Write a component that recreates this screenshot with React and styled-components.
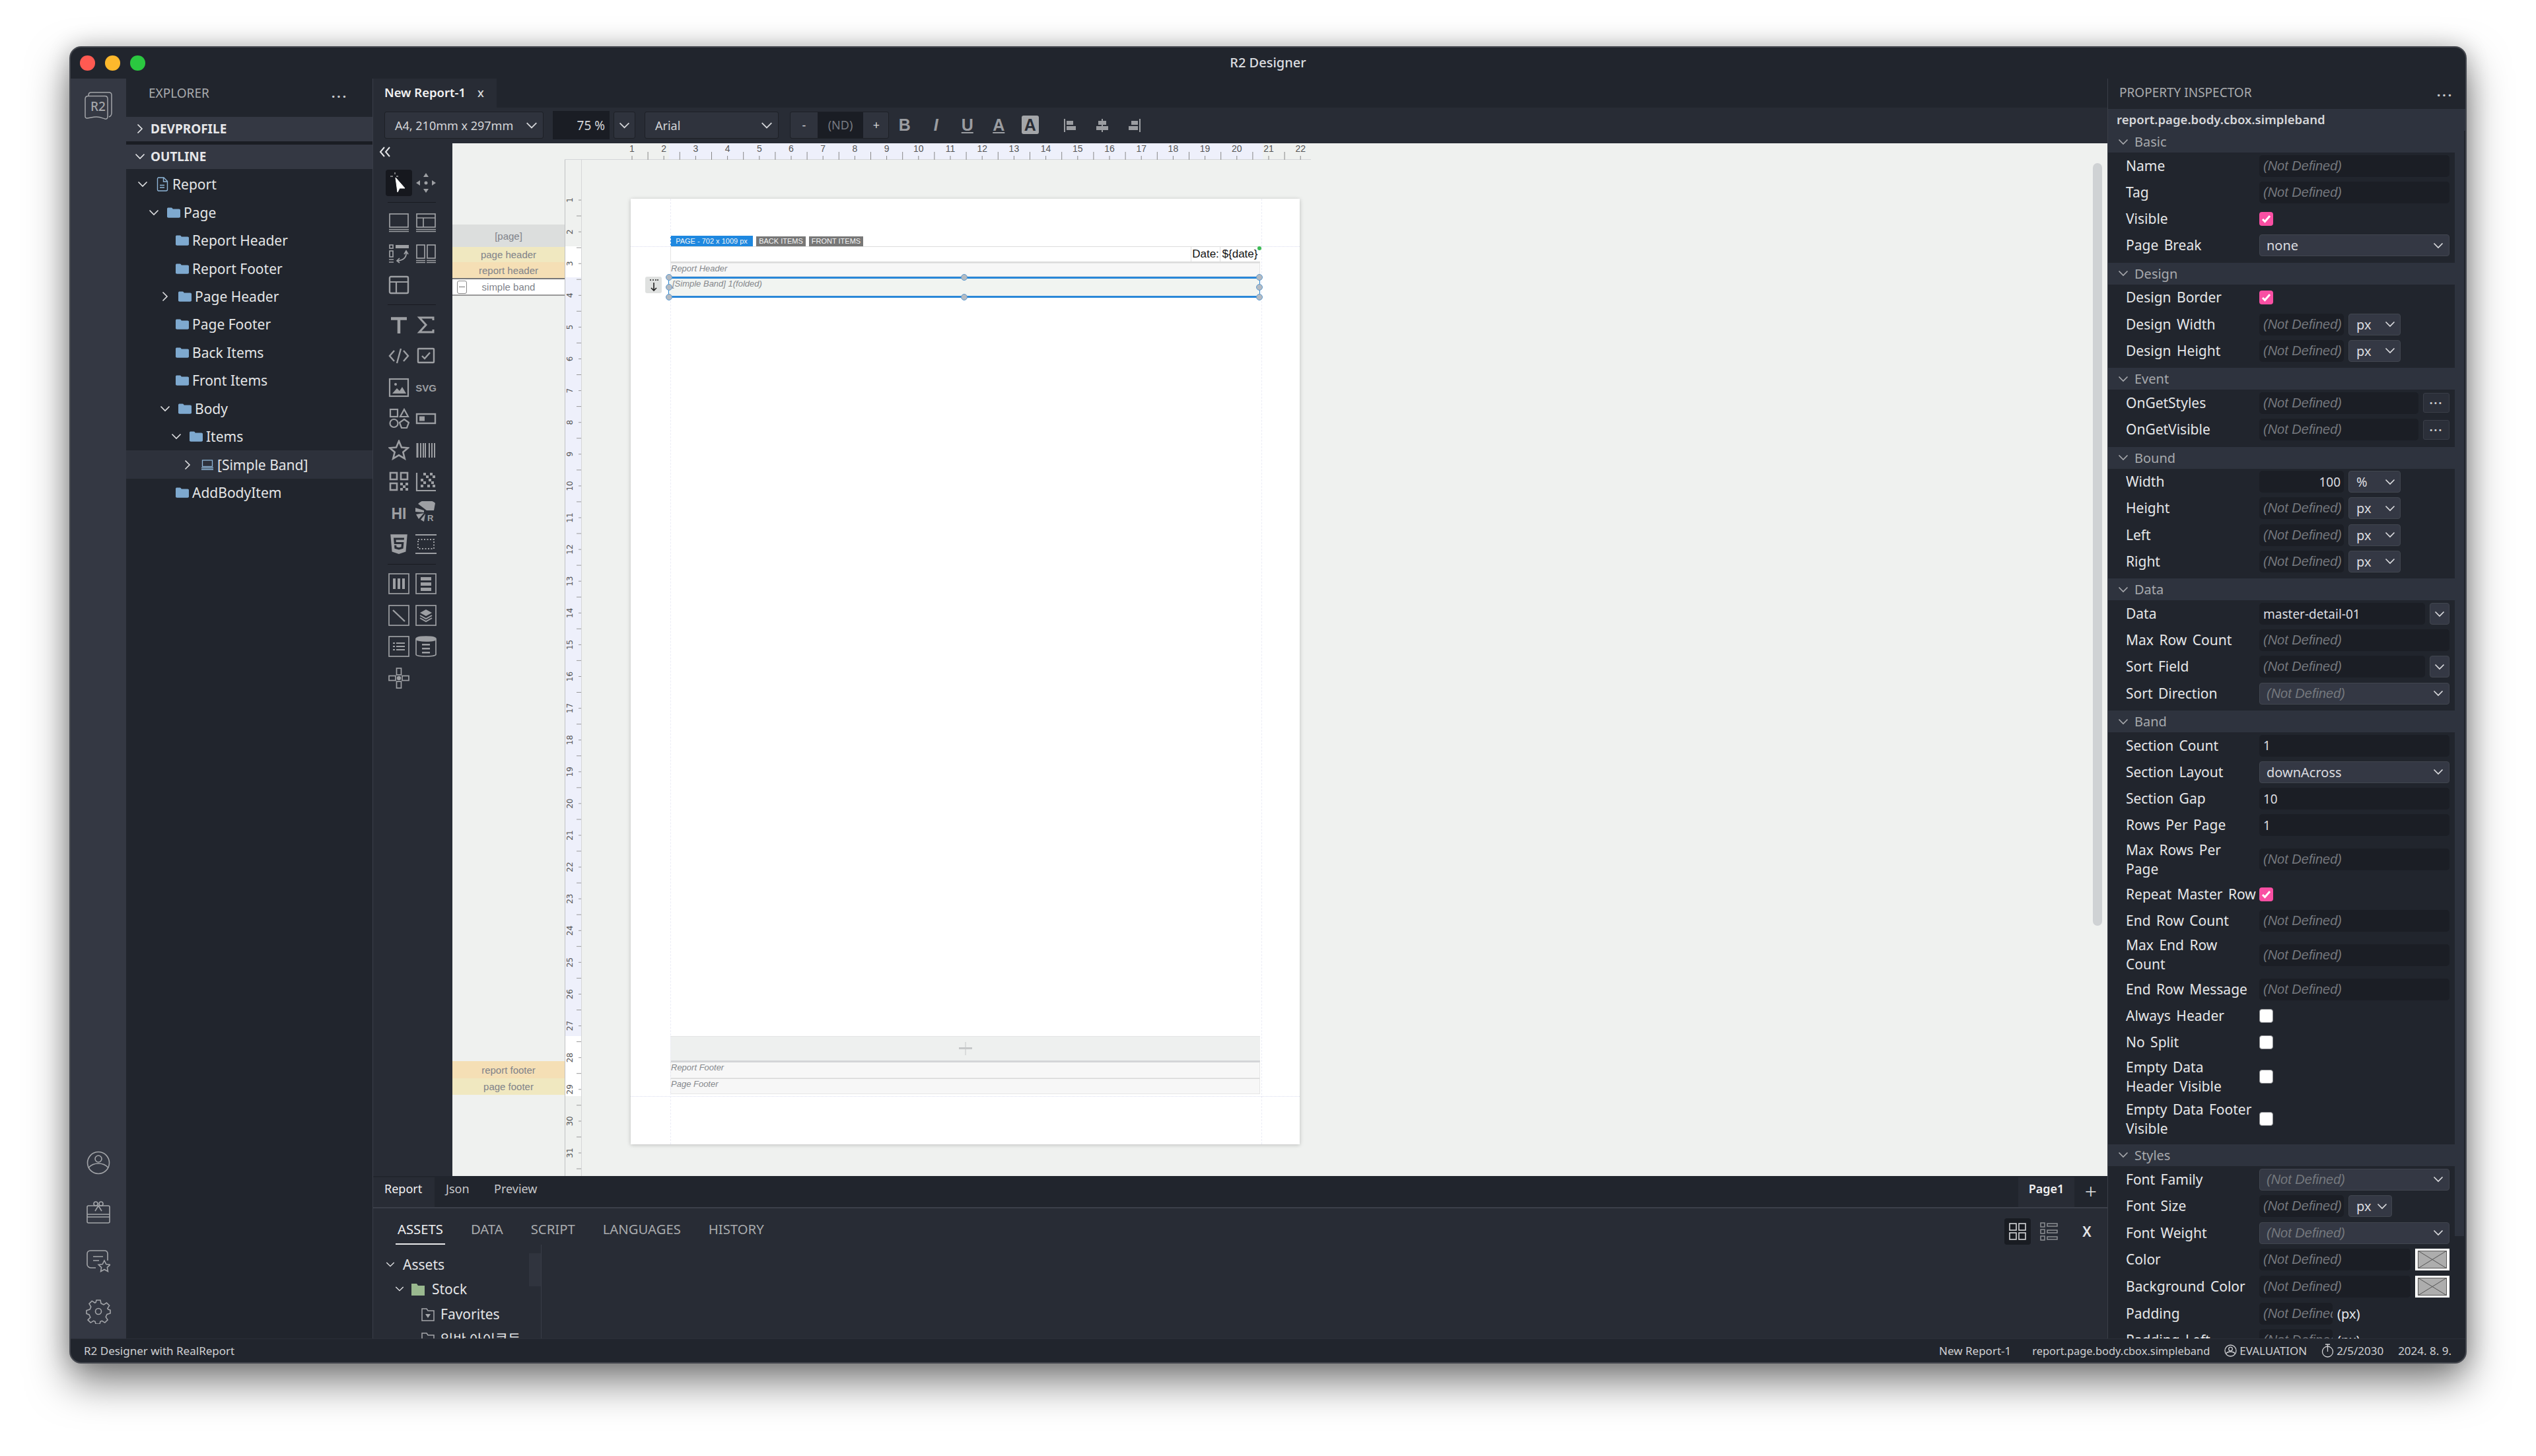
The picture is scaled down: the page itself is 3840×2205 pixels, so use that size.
import React from 'react'
import styled, { createGlobalStyle } from 'styled-components'
import { FaHtml5 } from 'react-icons/fa'

const GlobalStyle = createGlobalStyle`
  html, body { margin: 0; padding: 0; background: #fff; }
  body { width: 3840px; height: 2205px; overflow: hidden; font-family: "Noto Sans", "Noto Sans CJK KR", sans-serif; }
  * { box-sizing: border-box; }
`

const Screen = styled.div`
  width: 3840px;
  height: 2205px;
  padding: 70px 105px 140px;
`
const Window = styled.div`
  width: 3630px;
  height: 1995px;
  display: flex;
  flex-direction: column;
  background: #21252d;
  border: 2px solid #44474e;
  border-radius: 18px;
  overflow: hidden;
  box-shadow: 0 28px 62px rgba(0, 0, 0, 0.5), 0 0 34px rgba(0, 0, 0, 0.2);
`
const TitleBar = styled.div`
  height: 47px;
  flex: none;
  display: grid;
  grid-template-columns: 1fr auto 1fr;
  align-items: center;
`
const Lights = styled.div`
  display: flex;
  gap: 15.4px;
  margin-left: 14px;
`
const Light = styled.span`
  width: 22.6px;
  height: 22.6px;
  border-radius: 50%;
  background: ${(p) => p.$color};
`
const Title = styled.div`
  font-size: 20px;
  font-weight: 500;
  padding-bottom: 3px;
  color: #dcdde0;
`
const Main = styled.div`
  flex: 1;
  min-height: 0;
  display: flex;
`
const Rail = styled.div`
  width: 84px;
  flex: none;
  background: #343843;
  display: flex;
  flex-direction: column;
  justify-content: space-between;
  align-items: center;
  padding: 20px 0 22px;
  color: #a3a5a9;
`
const RailGroup = styled.div`
  display: flex;
  flex-direction: column;
  align-items: center;
  gap: 40px;
`
const Explorer = styled.div`
  width: 373px;
  flex: none;
  display: flex;
  flex-direction: column;
`
const PanelHead = styled.div`
  height: ${(p) => p.$h}px;
  flex: none;
  display: flex;
  align-items: center;
  justify-content: space-between;
  padding: 0 ${(p) => p.$right}px ${(p) => p.$pb}px ${(p) => p.$left}px;
  font-size: 19px;
  color: #a9abae;
`
const Dots = styled.span`
  font-size: 19px;
  font-weight: 700;
  letter-spacing: 3px;
  color: #c9cacc;
  line-height: 1;
`
const FoldBar = styled.div`
  height: ${(p) => p.$h}px;
  flex: none;
  display: flex;
  align-items: center;
  background: #343843;
  padding: 0 0 2px 13px;
  gap: 8px;
  font-size: 19px;
  font-weight: 700;
  color: #e6e7e9;
`
const FoldLine = styled.div`
  height: 5px;
  flex: none;
  background: #1a1d23;
`
const Tree = styled.div`
  padding-top: 2px;
  display: flex;
  flex-direction: column;
`
const TreeRow = styled.div`
  height: 42.45px;
  display: flex;
  align-items: center;
  padding-left: ${(p) => p.$x - 199}px;
  font-size: 21px;
  color: #e4e5e7;
  background: ${(p) => (p.$active ? '#2d313b' : 'transparent')};
`
const ChevSlot = styled.span`
  width: 16px;
  flex: none;
  display: flex;
  justify-content: center;
  visibility: ${(p) => (p.$hidden ? 'hidden' : 'visible')};
  color: #dfe0e2;
  margin-right: 12px;
`
const TreeIcon = styled.span`
  width: 20px;
  flex: none;
  display: flex;
  justify-content: center;
  margin-right: 5px;
  color: #8fb6d8;
`
const Center = styled.div`
  flex: 1;
  min-width: 0;
  display: flex;
  flex-direction: column;
  border-left: 1px solid #3a3e48;
`
const TabStrip = styled.div`
  height: 44px;
  flex: none;
  display: flex;
`
const DocTab = styled.div`
  width: 187px;
  background: #282c35;
  display: flex;
  align-items: center;
  padding: 0 0 3px 17px;
  gap: 18px;
  font-size: 18.5px;
  font-weight: 600;
  color: #f2f2f3;
`
const DocClose = styled.span`
  font-size: 18px;
  font-weight: 500;
  color: #d8d9db;
`
const Toolbar = styled.div`
  height: 54px;
  flex: none;
  background: #282c35;
  display: flex;
  align-items: center;
  padding: 0 0 1px 17px;
  font-size: 18px;
  color: #d4d5d8;
`
const ToolSelect = styled.div`
  width: ${(p) => p.$w}px;
  height: 41px;
  flex: none;
  margin-left: ${(p) => p.$ml || 0}px;
  display: flex;
  align-items: center;
  justify-content: space-between;
  padding: 0 ${(p) => p.$pr ?? 8}px 0 ${(p) => p.$pl ?? 15}px;
  background: #2f333d;
  border: 1px solid #1d2026;
  border-radius: 3px;
`
const ZoomInput = styled.div`
  width: 86px;
  height: 43px;
  flex: none;
  margin-left: 14px;
  background: #1a1d24;
  display: flex;
  align-items: center;
  justify-content: flex-end;
  padding-right: 7px;
  font-size: 19px;
`
const Stepper = styled.div`
  width: 150px;
  height: 41px;
  flex: none;
  margin-left: 17px;
  display: grid;
  grid-template-columns: 41px 69px 40px;
  background: #2f333d;
  border: 1px solid #1d2026;
  border-radius: 3px;
  text-align: center;
  line-height: 39px;
`
const StepValue = styled.span`
  background: #1a1d24;
  color: #777a81;
`
const FormatBtn = styled.span`
  width: 47.5px;
  flex: none;
  text-align: center;
  font-family: "Liberation Sans", sans-serif;
  font-size: 25px;
  font-weight: 700;
  font-style: ${(p) => (p.$italic ? 'italic' : 'normal')};
  text-decoration: ${(p) => (p.$under ? 'underline' : 'none')};
  color: #9b9da1;
`
const BoxA = styled.span`
  display: inline-block;
  width: 26px;
  height: 28px;
  line-height: 28px;
  border-radius: 3px;
  background: #a4a6a9;
  color: #2a2d35;
  font-size: 25px;
`
const AlignBtn = styled.span`
  width: 48px;
  flex: none;
  display: flex;
  justify-content: center;
  margin-left: ${(p) => p.$ml || 0}px;
  color: #9b9da1;
`
const Workspace = styled.div`
  height: 1564px;
  flex: none;
  display: flex;
`
const Toolbox = styled.div`
  width: 120px;
  flex: none;
  background: #282c35;
  padding-left: 18px;
  display: flex;
  flex-direction: column;
  color: #9d9fa3;
`
const Collapse = styled.div`
  height: 36px;
  flex: none;
  padding-top: 4px;
  margin-left: -9px;
  color: #e4e5e7;
`
const ToolGrid = styled.div`
  display: grid;
  grid-template-columns: 41.5px 41.5px;
  grid-auto-rows: 47.5px;
`
const ToolCell = styled.div`
  display: flex;
  align-items: center;
  justify-content: center;
`
const ActiveTool = styled.div`
  width: 40px;
  height: 40px;
  display: flex;
  align-items: center;
  justify-content: center;
  border-radius: 4px;
  background: #16181e;
`
const ToolSep = styled.div`
  width: 73px;
  height: 12.5px;
  margin-left: 4px;
  flex: none;
  display: flex;
  align-items: center;
  &::after {
    content: '';
    width: 100%;
    height: 1px;
    background: #181a20;
  }
`
const Canvas = styled.div`
  flex: 1;
  min-width: 0;
  position: relative;
  display: flex;
  background: #eff1ef;
  overflow: hidden;
`
const CanvasThumb = styled.div`
  position: absolute;
  right: 8px;
  top: 30px;
  width: 14px;
  height: 1155px;
  border-radius: 7px;
  background: #cfd2d4;
`
const BandColumn = styled.div`
  width: 170px;
  flex: none;
  display: flex;
  flex-direction: column;
  padding: 123px 0;
  font-family: "Liberation Sans", sans-serif;
  font-size: 15px;
  color: #80838a;
`
const BandTag = styled.div`
  height: ${(p) => p.$h}px;
  flex: none;
  display: flex;
  align-items: center;
  justify-content: center;
  position: relative;
  background: ${(p) => p.$bg};
  border-top: ${(p) => (p.$ruled ? '2px solid #777' : 'none')};
  border-bottom: ${(p) => (p.$ruled ? '2px solid #999' : 'none')};
  margin-bottom: ${(p) => (p.$push ? 'auto' : '0')};
`
const FoldMark = styled.span`
  position: absolute;
  left: 7px;
  top: 2px;
  width: 15px;
  height: 20px;
  border: 1px solid #888;
  border-radius: 3px;
  &::after {
    content: '';
    position: absolute;
    left: 2px;
    right: 2px;
    top: 8px;
    height: 1px;
    background: #777;
  }
`
const RulerStage = styled.div`
  flex: 1;
  min-width: 0;
  display: flex;
  flex-direction: column;
`
const TopRuler = styled.svg`
  display: block;
  height: 25px;
  width: 2336px;
  flex: none;
`
const StageRow = styled.div`
  flex: 1;
  min-height: 0;
  display: flex;
`
const LeftRuler = styled.svg`
  display: block;
  width: 26px;
  height: 1539px;
  flex: none;
  border-left: 1px solid #bfc1c3;
  border-right: 1px solid #d6d7d8;
`
const Stage = styled.div`
  flex: 1;
  padding: 59px 0 0 74px;
`
const Sheet = styled.div`
  position: relative;
  width: 1013px;
  height: 1432px;
  display: flex;
  flex-direction: column;
  padding: 56px 60px 76px;
  background: #fff;
  box-shadow: 0 1px 6px rgba(0, 0, 0, 0.22);
  font-family: "Liberation Sans", sans-serif;
`
const GuideV = styled.span`
  position: absolute;
  top: 0;
  bottom: 0;
  left: ${(p) => p.$x}px;
  border-left: 1px dashed #ebecf6;
`
const GuideH = styled.span`
  position: absolute;
  left: 0;
  right: 0;
  top: ${(p) => p.$y}px;
  border-top: 1px dotted #d9dbee;
`
const SheetTabs = styled.div`
  height: 16px;
  flex: none;
  display: flex;
  align-items: flex-end;
  gap: 5px;
`
const SheetTab = styled.span`
  height: ${(p) => (p.$on ? 16 : 15)}px;
  width: ${(p) => p.$w}px;
  flex: none;
  text-align: center;
  line-height: ${(p) => (p.$on ? 16 : 15)}px;
  font-size: 11px;
  white-space: nowrap;
  color: #f4f4f4;
  background: ${(p) => (p.$on ? '#1e88e0' : '#777')};
`
const HeaderBand = styled.div`
  height: 25px;
  flex: none;
  display: flex;
  justify-content: flex-end;
  padding-right: 1px;
  border-top: 1px solid #ddd;
  border-bottom: 2px solid #dcdcdc;
  border-left: 1px solid #e3e3e3;
  position: relative;
  font-size: 17px;
  color: #111;
`
const DateCell = styled.span`
  width: ${(p) => p.$w}px;
  flex: none;
  border-left: 1px solid #e0e0e0;
  text-align: center;
  white-space: nowrap;
  line-height: 22px;
`
const GreenDot = styled.span`
  position: absolute;
  right: -2px;
  top: -1px;
  width: 6px;
  height: 6px;
  border-radius: 50%;
  background: #3dbb55;
`
const GrayBand = styled.div`
  height: ${(p) => p.$h}px;
  flex: none;
  background: #f7f7f7;
  border: 1px solid #e6e6e6;
  border-top-color: ${(p) => p.$top || '#e6e6e6'};
  font-size: 13px;
  font-style: italic;
  color: #85888c;
`
const SimpleBand = styled.div`
  position: relative;
  height: 32px;
  flex: none;
  margin-left: -3px;
  background: #f1f4f1;
  border-top: 3px solid #2a87d8;
  border-bottom: 3px solid #2a87d8;
  border-left: 1px solid #2a87d8;
  border-right: 1px solid #2a87d8;
  padding-left: 5px;
  font-size: 13px;
  font-style: italic;
  color: #85888c;
`
const Handle = styled.span`
  position: absolute;
  left: ${(p) => p.$x};
  top: ${(p) => p.$y};
  width: 10px;
  height: 10px;
  margin: -5px 0 0 -5px;
  border-radius: 50%;
  background: #b4bac1;
  border: 1px solid #5d9bd2;
`
const DragWidget = styled.span`
  position: absolute;
  left: -36px;
  top: -3px;
  width: 25px;
  height: 25px;
  border-radius: 3px;
  background: #dfe1e0;
  display: flex;
  align-items: center;
  justify-content: center;
  color: #222;
`
const BodySpace = styled.div`
  flex: 1;
`
const AddBand = styled.div`
  height: 39px;
  flex: none;
  display: flex;
  align-items: center;
  justify-content: center;
  background: #eef0ef;
  border-top: 1px solid #e4e5e5;
  border-bottom: 2px solid #d4d5d8;
  color: #c6c8c9;
`
const Bottom = styled.div`
  flex: 1;
  min-height: 0;
  display: flex;
  flex-direction: column;
`
const PageTabs = styled.div`
  height: 49px;
  flex: none;
  display: flex;
  padding-top: 2px;
  border-bottom: 2px solid #3b3f49;
  font-size: 18px;
  color: #c6c7ca;
`
const PageTab = styled.div`
  width: ${(p) => p.$w}px;
  flex: none;
  display: flex;
  align-items: center;
  justify-content: ${(p) => (p.$center ? 'center' : 'flex-start')};
  padding-left: ${(p) => p.$pl || 0}px;
  padding-bottom: 11px;
  margin-left: ${(p) => p.$ml || 0};
  background: ${(p) => (p.$on ? '#282c35' : 'transparent')};
  color: ${(p) => (p.$on ? '#f1f1f2' : '#c6c7ca')};
  font-weight: ${(p) => (p.$bold ? 600 : 400)};
`
const AddPage = styled.span`
  width: 50px;
  flex: none;
  text-align: center;
  font-size: 32px;
  line-height: 42px;
  font-weight: 300;
  color: #e0e1e3;
`
const AssetPanel = styled.div`
  flex: 1;
  min-height: 0;
  overflow: hidden;
  background: #282c35;
`
const AssetHead = styled.div`
  height: 55px;
  display: flex;
  justify-content: space-between;
  padding: 0 16px 0 34px;
`
const AssetTabs = styled.div`
  display: flex;
  gap: 36px;
`
const AssetTab = styled.div`
  height: 55px;
  padding: 9px 3px 0;
  display: flex;
  align-items: center;
  font-size: 20.3px;
  color: ${(p) => (p.$on ? '#eeeef0' : '#a9abae')};
  border-bottom: 2px solid ${(p) => (p.$on ? '#e8e8ea' : 'transparent')};
`
const ViewTools = styled.div`
  display: flex;
  align-items: center;
  padding-top: 15px;
  color: #c9cacc;
`
const ViewBtn = styled.span`
  width: 40px;
  height: 40px;
  display: flex;
  align-items: center;
  justify-content: center;
  border-radius: 4px;
  background: ${(p) => (p.$on ? '#191c22' : 'transparent')};
  margin-right: ${(p) => p.$mr}px;
  color: ${(p) => (p.$dim ? '#8c8e92' : '#d4d5d7')};
`
const CloseX = styled.span`
  width: 30px;
  text-align: center;
  font-size: 21px;
  font-weight: 600;
  color: #e4e5e7;
`
const AssetTree = styled.div`
  position: relative;
  width: 255px;
  height: 142px;
  padding-top: 11px;
  border-right: 1px solid #393d47;
`
const AssetThumb = styled.span`
  position: absolute;
  right: 0;
  top: 13px;
  width: 18px;
  height: 50px;
  background: #30343e;
`
const AssetRow = styled.div`
  height: 37.5px;
  display: flex;
  align-items: center;
  padding-left: ${(p) => p.$x}px;
  gap: ${(p) => p.$gap}px;
  font-size: 21px;
  white-space: nowrap;
  color: #e4e5e7;
`
const StatusBar = styled.div`
  height: 36px;
  flex: none;
  display: flex;
  align-items: center;
  justify-content: space-between;
  padding: 0 21px 0 20px;
  border-top: 1px solid #2b2f38;
  font-size: 17px;
  color: #cfd0d3;
`
const StatusItems = styled.div`
  display: flex;
  align-items: center;
  gap: 22px;
`
const StatusItem = styled.span`
  display: flex;
  align-items: center;
  gap: 4px;
  font-size: ${(p) => p.$size || 17}px;
  margin-right: ${(p) => p.$mr || 0}px;
`
const Inspector = styled.div`
  width: 542px;
  flex: none;
  display: flex;
  flex-direction: column;
  border-left: 1px solid #3a3e48;
  overflow: hidden;
`
const PathBar = styled.div`
  height: 33px;
  flex: none;
  display: flex;
  align-items: center;
  padding: 0 0 2px 13px;
  background: #2e333e;
  font-size: 18.6px;
  font-weight: 600;
  color: #d6d7da;
`
const PropScroll = styled.div`
  flex: 1;
  min-height: 0;
  display: flex;
  overflow: hidden;
`
const PropList = styled.div`
  width: 525px;
  flex: none;
`
const PropThumb = styled.div`
  width: 14px;
  height: 1674px;
  flex: none;
  background: #2e333e;
`
const SectionHead = styled.div`
  height: 33px;
  display: flex;
  align-items: center;
  padding-left: 15px;
  gap: 9px;
  background: #2e333e;
  font-size: 20px;
  color: #a7a9ad;
`
const SectionBody = styled.div`
  padding: 0 0 6px;
`
const Row = styled.div`
  min-height: ${(p) => p.$h}px;
  display: flex;
  align-items: center;
  padding: 3px 8px 3px 27px;
`
const Label = styled.div`
  width: 202px;
  flex: none;
  font-size: 21px;
  line-height: 29px;
  word-spacing: 3px;
  white-space: pre-line;
  color: #e6e7e9;
`
const Fields = styled.div`
  flex: 1;
  min-width: 0;
  display: flex;
  align-items: center;
  gap: 7px;
`
const TextBox = styled.div`
  height: 33px;
  width: ${(p) => (p.$w ? `${p.$w}px` : 'auto')};
  flex: ${(p) => (p.$w ? 'none' : 1)};
  min-width: 0;
  overflow: hidden;
  display: flex;
  align-items: center;
  justify-content: ${(p) => (p.$right ? 'flex-end' : 'flex-start')};
  padding: 0 ${(p) => (p.$right ? 5 : 0)}px 0 6px;
  background: #1b1e25;
  border-radius: 5px;
  font-size: 19px;
  white-space: nowrap;
  color: #dcdde0;
`
const Blank = styled.span`
  display: block;
  min-width: 0;
  overflow: hidden;
  font-family: "Liberation Sans", sans-serif;
  font-style: italic;
  font-size: 20px;
  white-space: nowrap;
  color: #75787e;
`
const DropBox = styled.div`
  height: 33px;
  width: ${(p) => (p.$w ? `${p.$w}px` : 'auto')};
  flex: ${(p) => (p.$w ? 'none' : 1)};
  display: flex;
  align-items: center;
  justify-content: space-between;
  padding: 0 ${(p) => p.$pr ?? 8}px 0 ${(p) => p.$pl ?? 10}px;
  background: #343844;
  border: 1px solid #41464f;
  border-radius: 4px;
  font-size: 20px;
  color: #dcdde0;
`
const Tick = styled.span`
  width: 21px;
  height: 21px;
  flex: none;
  display: flex;
  align-items: center;
  justify-content: center;
  border-radius: 4px;
  background: ${(p) => (p.$on ? '#f94fa3' : '#fff')};
  border: ${(p) => (p.$on ? 'none' : '1px solid #8a8c90')};
  color: #fff;
`
const MoreBtn = styled.span`
  width: 40px;
  height: 30px;
  flex: none;
  text-align: center;
  line-height: 20px;
  font-weight: 700;
  letter-spacing: 2px;
  font-size: 17px;
  background: #2b2f39;
  border: 1px solid #3a3e48;
  border-radius: 3px;
  color: #c9cacc;
`
const Swatch = styled.span`
  width: 52px;
  height: 33px;
  flex: none;
  background: #fff;
  padding: 3px 4px;
  display: flex;
`
const UnitText = styled.span`
  font-size: 20px;
  color: #e6e7e9;
`

function Chevron({ dir = 'down', size = 16 }) {
  const rot = { down: 0, right: -90 }[dir]
  return (
    <svg width={size} height={size} viewBox="0 0 16 16" fill="none" stroke="currentColor" strokeWidth="1.6" style={{ transform: `rotate(${rot}deg)` }}>
      <path d="M1.5 4.5 8 11l6.5-6.5" />
    </svg>
  )
}

function FolderIcon() {
  return (
    <svg width="20" height="16" viewBox="0 0 20 16" fill="#7ea9cf">
      <path d="M0 2.2C0 1 .8.5 1.8.5h4.6c.8 0 1.3.3 1.7 1l.6.9H18c1.2 0 2 .7 2 1.8V14c0 1-.8 1.7-2 1.7H2c-1.2 0-2-.7-2-1.7z" />
    </svg>
  )
}

function DocIcon() {
  return (
    <svg width="18" height="22" viewBox="0 0 18 22" fill="none" stroke="#8fb6d8" strokeWidth="1.4">
      <path d="M2.5 1H11l5.500 5.500V19a2 2 0 0 1-2 2h-12a2 2 0 0 1-1-2V3a2 2 0 0 1 1-2z" />
      <path d="M10.500 1v6h6M5 12.500h7M5 16h7" />
    </svg>
  )
}

function BandIcon() {
  return (
    <svg width="18" height="16" viewBox="0 0 18 16" fill="none" stroke="#8fb6d8" strokeWidth="1.3">
      <rect x="1.5" y="1" width="15" height="9.5" />
      <path d="M0 12.5h18M0 15h18" />
    </svg>
  )
}

function Logo() {
  return (
    <svg width="42" height="42" viewBox="0 0 42 42" fill="none" stroke="currentColor" strokeWidth="1.5">
      <path d="M6 7V5.500C6 3 7.500 1 10 1h27c2.500 0 4 1.500 4 4v27c0 3-1 5-4 6" />
      <path d="M1 11c0-3 1.500-4.500 4.500-4.500H31c2.500 0 4 1.500 4 4.500v27c0 2.500-2 3.500-4 3-3.500-1-7-3-13-3-5 0-10 1.500-14 2-2 .3-3-1-3-3z" />
      <text x="9" y="29" fontFamily="Noto Sans" fontSize="19" fontWeight="500" fill="currentColor" stroke="none">R2</text>
    </svg>
  )
}

const S = ({ children, w = 32, h = 32 }) => (
  <svg width={w} height={h} viewBox={`0 0 ${w} ${h}`} fill="none" stroke="currentColor" strokeWidth="1.7">
    {children}
  </svg>
)

const TOOLS_B = [
  <S key="a"><rect x="2" y="3" width="28" height="20" /><path d="M1 26.500h30M1 29.500h30" /></S>,
  <S key="b"><rect x="2" y="3" width="28" height="20" /><path d="M2 9h28M12 9v14M1 26.500h30M1 29.500h30" /></S>,
  <S key="c">
    <rect x="2" y="3" width="5" height="5" />
    <rect x="11" y="3" width="20" height="5" fill="currentColor" stroke="none" />
    <rect x="2" y="12" width="5" height="9" />
    <path d="M1 25h7M1 29h7M27 13c1 8-3 13-13 14M24 17l3-5 3 5M17 23l-4 4 4 3" />
  </S>,
  <S key="d"><rect x="2" y="3" width="12" height="20" /><rect x="18" y="3" width="12" height="20" /><path d="M1 26.500h14M1 29.500h14M17 26.500h14M17 29.500h14" /></S>,
  <S key="e"><rect x="2" y="3" width="28" height="25" rx="2" strokeWidth="2.4" /><path d="M2 11h28M12 11v17" strokeWidth="2.2" /></S>,
]
const TOOLS_C = [
  <S key="a"><path d="M4 6.500h24M16 6.500V29" strokeWidth="4.5" /></S>,
  <S key="b"><path d="M27 9V5H6l10 11L6 27h21v-4" strokeWidth="3" /></S>,
  <S key="c"><path d="M9 8l-7 8 7 8M23 8l7 8-7 8M19 5l-6 22" strokeWidth="2.4" /></S>,
  <S key="d"><rect x="4" y="5" width="24" height="21" rx="1" strokeWidth="2.4" /><path d="M10 16l4 4 8-9" strokeWidth="2.4" /></S>,
  <S key="e"><rect x="2" y="3" width="28" height="26" strokeWidth="2.2" /><circle cx="11" cy="11" r="2" fill="currentColor" stroke="none" /><path d="M6 25l7-8 4 4 4-6 6 10z" fill="currentColor" stroke="none" /></S>,
  <svg key="f" width="34" height="32" viewBox="0 0 34 32"><text x="17" y="22" textAnchor="middle" fontFamily="Liberation Sans" fontWeight="700" fontSize="15" fill="currentColor">SVG</text></svg>,
  <S key="g">
    <rect x="3" y="2" width="11" height="11" strokeWidth="2.2" />
    <path d="M24 2l6 11H18z" strokeWidth="2.2" />
    <circle cx="8.500" cy="23" r="6" strokeWidth="2.2" />
    <path d="M24 17l7 5-3 8h-8l-3-8z" strokeWidth="2.2" />
  </S>,
  <S key="h"><rect x="2" y="9" width="28" height="14" strokeWidth="2.4" /><rect x="6" y="12.500" width="8" height="7" fill="currentColor" stroke="none" /></S>,
  <S key="i"><path d="M16 2l4 9.500 10 .8-7.700 6.400 2.500 9.800L16 23.300l-8.800 5.200 2.500-9.800L2 12.300l10-.8z" strokeWidth="2.6" /></S>,
  <S key="j">
    <path d="M3 5v22" strokeWidth="3" />
    <path d="M8 5v22M12 5v22M15 5v22M21 5v22M25 5v22M29 5v22" strokeWidth="2" />
  </S>,
  <S key="k">
    <rect x="3" y="3" width="10" height="10" strokeWidth="2.6" />
    <rect x="19" y="3" width="10" height="10" strokeWidth="2.6" />
    <rect x="3" y="19" width="10" height="10" strokeWidth="2.6" />
    <path d="M18 18h4v4h-4zM26 18h4v4h-4zM22 22h4v4h-4zM18 26h4v4h-4zM26 26h4v4h-4z" fill="currentColor" stroke="none" />
  </S>,
  <S key="l">
    <path d="M2 3v27h29" strokeWidth="2.2" />
    <path d="M12 3h4v4h-4zM22 3h4v4h-4zM16 7h4v4h-4zM26 7h4v4h-4zM8 12h4v4H8zM20 12h4v4h-4zM12 16h4v4h-4zM24 16h4v4h-4zM8 21h4v4H8zM18 21h4v4h-4zM26 21h4v4h-4z" fill="currentColor" stroke="none" />
  </S>,
  <svg key="m" width="32" height="32" viewBox="0 0 32 32"><text x="16" y="25" textAnchor="middle" fontFamily="Liberation Sans" fontWeight="700" fontSize="23" fill="currentColor">HI</text></svg>,
  <svg key="n" width="34" height="36" viewBox="0 0 34 36" fill="currentColor">
    <path d="M18 14 5 4A19 19 0 0 1 31 3l-2 11z" />
    <path d="M14 14 1 10v6l13 1zM14 18 2 20l4 7zM16 19 9 28l5 3z" />
    <text x="19" y="30" fontFamily="Liberation Sans" fontWeight="700" fontSize="13">R</text>
  </svg>,
  <FaHtml5 key="o" size={34} />,
  <S key="p">
    <path d="M0 2h32M0 30h32" strokeWidth="2" />
    <rect x="4" y="9" width="24" height="14" strokeWidth="2" strokeDasharray="2 2.5" />
  </S>,
]
const TOOLS_D = [
  <S key="a"><rect x="1" y="1" width="30" height="30" /><path d="M7 8h4v16H7zM14 8h4v16h-4zM21 8h4v16h-4z" fill="currentColor" stroke="none" /></S>,
  <S key="b"><rect x="1" y="1" width="30" height="30" /><path d="M8 6h16v5H8zM8 14h16v5H8zM8 22h16v5H8z" fill="currentColor" stroke="none" /></S>,
  <S key="c"><rect x="1" y="1" width="30" height="30" /><path d="M7 8l18 17" strokeWidth="2.4" /></S>,
  <S key="d"><rect x="1" y="1" width="30" height="30" /><path d="M16 7l9 5-9 5-9-5z" fill="currentColor" stroke="none" /><path d="M7 16l9 5 9-5M7 20l9 5 9-5" strokeWidth="2" /></S>,
  <S key="e"><rect x="1" y="1" width="30" height="30" /><path d="M7 10h3v2H7zM7 15h3v2H7zM7 20h3v2H7zM12 10h13v2H12zM12 15h13v2H12zM12 20h13v2H12z" fill="currentColor" stroke="none" /></S>,
  <S key="f">
    <path d="M1 5v23c0 2 7 3 15 3s15-1 15-3V5" />
    <ellipse cx="16" cy="4.500" rx="15" ry="3.500" fill="currentColor" />
    <path d="M10 12h12v2.500H10zM10 18h12v2.500H10zM10 24h12v2.500H10z" fill="currentColor" stroke="none" />
  </S>,
  <S key="g">
    <rect x="12.500" y="1" width="7" height="10" />
    <rect x="12.500" y="21" width="7" height="10" />
    <rect x="1" y="12.500" width="10" height="7" />
    <rect x="21" y="12.500" width="10" height="7" />
    <circle cx="16" cy="16" r="3.2" fill="currentColor" stroke="none" />
  </S>,
]

const OUTLINE = [
  { x: 216, icon: 'doc', label: 'Report', open: true },
  { x: 233, icon: 'folder', label: 'Page', open: true },
  { x: 246, icon: 'folder', label: 'Report Header', leaf: true },
  { x: 246, icon: 'folder', label: 'Report Footer', leaf: true },
  { x: 250, icon: 'folder', label: 'Page Header' },
  { x: 246, icon: 'folder', label: 'Page Footer', leaf: true },
  { x: 246, icon: 'folder', label: 'Back Items', leaf: true },
  { x: 246, icon: 'folder', label: 'Front Items', leaf: true },
  { x: 250, icon: 'folder', label: 'Body', open: true },
  { x: 267, icon: 'folder', label: 'Items', open: true },
  { x: 284, icon: 'band', label: '[Simple Band]', active: true },
  { x: 246, icon: 'folder', label: 'AddBodyItem', leaf: true },
]

const SECTIONS = [
  ['Basic', 40.2, [
    { l: 'Name', k: 'blank' },
    { l: 'Tag', k: 'blank' },
    { l: 'Visible', k: 'tick', on: true },
    { l: 'Page Break', k: 'drop', v: 'none' },
  ]],
  ['Design', 40.2, [
    { l: 'Design Border', k: 'tick', on: true },
    { l: 'Design Width', k: 'unit', u: 'px' },
    { l: 'Design Height', k: 'unit', u: 'px' },
  ]],
  ['Event', 40.2, [
    { l: 'OnGetStyles', k: 'more' },
    { l: 'OnGetVisible', k: 'more' },
  ]],
  ['Bound', 40.2, [
    { l: 'Width', k: 'unit', u: '%', v: '100' },
    { l: 'Height', k: 'unit', u: 'px' },
    { l: 'Left', k: 'unit', u: 'px' },
    { l: 'Right', k: 'unit', u: 'px' },
  ]],
  ['Data', 40.2, [
    { l: 'Data', k: 'pick', v: 'master-detail-01' },
    { l: 'Max Row Count', k: 'blank' },
    { l: 'Sort Field', k: 'pick' },
    { l: 'Sort Direction', k: 'drop' },
  ]],
  ['Band', 40.2, [
    { l: 'Section Count', k: 'value', v: '1' },
    { l: 'Section Layout', k: 'drop', v: 'downAcross' },
    { l: 'Section Gap', k: 'value', v: '10' },
    { l: 'Rows Per Page', k: 'value', v: '1' },
    { l: 'Max Rows Per\nPage', k: 'blank' },
    { l: 'Repeat Master Row', k: 'tick', on: true },
    { l: 'End Row Count', k: 'blank' },
    { l: 'Max End Row\nCount', k: 'blank' },
    { l: 'End Row Message', k: 'blank' },
    { l: 'Always Header', k: 'tick' },
    { l: 'No Split', k: 'tick' },
    { l: 'Empty Data\nHeader Visible', k: 'tick' },
    { l: 'Empty Data Footer\nVisible', k: 'tick' },
  ]],
  ['Styles', 40.6, [
    { l: 'Font Family', k: 'drop' },
    { l: 'Font Size', k: 'unit', u: 'px', small: true },
    { l: 'Font Weight', k: 'drop' },
    { l: 'Color', k: 'color' },
    { l: 'Background Color', k: 'color' },
    { l: 'Padding', k: 'pad' },
    { l: 'Padding Left', k: 'pad' },
  ]],
]

const NotSet = () => <Blank>(Not Defined)</Blank>

function Check() {
  return (
    <svg width="15" height="13" viewBox="0 0 15 13" fill="none" stroke="#fff" strokeWidth="3">
      <path d="M2 7l3.500 3.500L13 2" />
    </svg>
  )
}

function Field({ row }) {
  switch (row.k) {
    case 'tick':
      return <Tick $on={row.on}>{row.on && <Check />}</Tick>
    case 'drop':
      return <Fields><DropBox>{row.v ? row.v : <NotSet />}<Chevron /></DropBox></Fields>
    case 'unit':
      return (
        <Fields>
          <TextBox $w={128} $right={!!row.v}>{row.v || <NotSet />}</TextBox>
          <DropBox $w={row.small ? 66 : 79} $pl={11} $pr={row.small ? 6 : 7}>{row.u}<Chevron /></DropBox>
        </Fields>
      )
    case 'more':
      return <Fields><TextBox><NotSet /></TextBox><MoreBtn>...</MoreBtn></Fields>
    case 'pick':
      return (
        <Fields>
          <TextBox>{row.v || <NotSet />}</TextBox>
          <DropBox $w={30} $pl={6} $pr={6}><Chevron /></DropBox>
        </Fields>
      )
    case 'value':
      return <Fields><TextBox>{row.v}</TextBox></Fields>
    case 'color':
      return (
        <Fields>
          <TextBox><NotSet /></TextBox>
          <Swatch>
            <svg width="44" height="27" viewBox="0 0 44 27" fill="#adadad" stroke="#555" strokeWidth="1">
              <rect x=".5" y=".5" width="43" height="26" />
              <path d="M0 0l44 27M44 0 0 27" fill="none" />
            </svg>
          </Swatch>
        </Fields>
      )
    case 'pad':
      return <Fields><TextBox $w={111}><NotSet /></TextBox><UnitText>(px)</UnitText></Fields>
    default:
      return <Fields><TextBox><NotSet /></TextBox></Fields>
  }
}

function ToolRows({ items }) {
  return (
    <ToolGrid>
      {items.map((node, i) => (
        <ToolCell key={i}>{node}</ToolCell>
      ))}
    </ToolGrid>
  )
}

const CMS = Array.from({ length: 22 }, (_, i) => i)
const CMS_V = Array.from({ length: 31 }, (_, i) => i)

export default function App() {
  return (
    <Screen>
      <GlobalStyle />
      <Window>
        <TitleBar>
          <Lights>
            <Light $color="#ff5a52" />
            <Light $color="#fdb82c" />
            <Light $color="#2bc840" />
          </Lights>
          <Title>R2 Designer</Title>
        </TitleBar>
        <Main>
          <Rail>
            <Logo />
            <RailGroup>
              <svg width="36" height="36" viewBox="0 0 36 36" fill="none" stroke="currentColor" strokeWidth="1.6">
                <circle cx="18" cy="18" r="16.500" />
                <circle cx="18" cy="12" r="5" />
                <path d="M3.500 25C8 20 13 19 18 19s10 1 14.500 6" />
              </svg>
              <svg width="36" height="34" viewBox="0 0 36 34" fill="none" stroke="currentColor" strokeWidth="1.6">
                <rect x="1" y="7" width="34" height="26" rx="2" />
                <path d="M1 20h34M1 24h34" />
                <circle cx="14" cy="4" r="3" />
                <circle cx="22" cy="4" r="3" />
                <path d="M18 7l-5 8M18 7l5 8" />
              </svg>
              <svg width="36" height="34" viewBox="0 0 36 34" fill="none" stroke="currentColor" strokeWidth="1.6">
                <path d="M14 27H7c-3 0-6-2-6-5V6c0-3 2-5 5-5h21c3 0 5 2 5 5v10" />
                <path d="M10 10h15M10 16h9" />
                <path d="M27 16l2.800 5.500 6 .8-4.400 4.100 1 6-5.400-2.900-5.400 2.900 1-6-4.400-4.100 6-.8z" />
              </svg>
              <svg width="38" height="38" viewBox="0 0 38 38" fill="none" stroke="currentColor" strokeWidth="1.6">
                <circle cx="19" cy="19" r="4.500" />
                <path d="M16 2h6l1 5 4 1.800 4.400-2.800 4.200 4.200-2.800 4.400L34 16l3 1v5l-5 1.500-1.800 4 2.800 4.400-4.200 4.200-4.400-2.800-2.400 1-1 3.700h-6l-1-3.700-2.400-1-4.400 2.800-4.200-4.200L6.800 28 5 24l-4-1.500v-5l5-1.500 1.800-4L5 7.400 9.200 3.200 13.600 6l1.400-.6z" />
              </svg>
            </RailGroup>
          </Rail>
          <Explorer>
            <PanelHead $h={58} $left={34} $right={37} $pb={14}>
              EXPLORER
              <Dots>...</Dots>
            </PanelHead>
            <FoldBar $h={37}>
              <Chevron dir="right" />
              DEVPROFILE
            </FoldBar>
            <FoldLine />
            <FoldBar $h={37}>
              <Chevron />
              OUTLINE
            </FoldBar>
            <Tree>
              {OUTLINE.map((n) => (
                <TreeRow key={n.label} $x={n.x} $active={n.active}>
                  <ChevSlot $hidden={n.leaf}>
                    <Chevron dir={n.open ? 'down' : 'right'} />
                  </ChevSlot>
                  <TreeIcon>
                    {n.icon === 'doc' ? <DocIcon /> : n.icon === 'band' ? <BandIcon /> : <FolderIcon />}
                  </TreeIcon>
                  {n.label}
                </TreeRow>
              ))}
            </Tree>
          </Explorer>
          <Center>
            <TabStrip>
              <DocTab>
                New Report-1
                <DocClose>x</DocClose>
              </DocTab>
            </TabStrip>
            <Toolbar>
              <ToolSelect $w={241}>
                A4, 210mm x 297mm
                <Chevron size={18} />
              </ToolSelect>
              <ZoomInput>75 %</ZoomInput>
              <ToolSelect $w={33} $ml={6} $pl={7} $pr={7}>
                <Chevron size={18} />
              </ToolSelect>
              <ToolSelect $w={203} $ml={14}>
                Arial
                <Chevron size={18} />
              </ToolSelect>
              <Stepper>
                <span>-</span>
                <StepValue>(ND)</StepValue>
                <span>+</span>
              </Stepper>
              <FormatBtn>B</FormatBtn>
              <FormatBtn $italic>I</FormatBtn>
              <FormatBtn $under>U</FormatBtn>
              <FormatBtn $under>A</FormatBtn>
              <FormatBtn><BoxA>A</BoxA></FormatBtn>
              <AlignBtn $ml={13}>
                <svg width="24" height="24" viewBox="0 0 24 24" fill="currentColor">
                  <path d="M2 2h2v20H2zM6 5h10v6H6zM6 13h14v6H6z" />
                </svg>
              </AlignBtn>
              <AlignBtn>
                <svg width="24" height="24" viewBox="0 0 24 24" fill="currentColor">
                  <path d="M11 2h2v20h-2zM6 5h12v6H6zM3 13h18v6H3z" />
                </svg>
              </AlignBtn>
              <AlignBtn>
                <svg width="24" height="24" viewBox="0 0 24 24" fill="currentColor">
                  <path d="M20 2h2v20h-2zM8 5h10v6H8zM4 13h14v6H4z" />
                </svg>
              </AlignBtn>
            </Toolbar>
            <Workspace>
              <Toolbox>
                <Collapse>
                  <svg width="18" height="16" viewBox="0 0 18 16" fill="none" stroke="currentColor" strokeWidth="2">
                    <path d="M8 1 2 8l6 7M16 1l-6 7 6 7" />
                  </svg>
                </Collapse>
                <ToolGrid>
                  <ToolCell>
                    <ActiveTool>
                      <S w={34} h={34}>
                        <path d="M12 9 26 25h-8l-3 6z" fill="#fff" stroke="#fff" strokeWidth="1" />
                        <path d="M11 1v3M4 7h4M13 7h3" stroke="#ddd" strokeWidth="1" />
                      </S>
                    </ActiveTool>
                  </ToolCell>
                  <ToolCell>
                    <S>
                      <path d="M16 1l4 6h-8zM16 31l4-6h-8zM1 16l6-4v8zM31 16l-6-4v8z" fill="currentColor" stroke="none" />
                      <circle cx="16" cy="16" r="2.500" fill="currentColor" stroke="none" />
                    </S>
                  </ToolCell>
                </ToolGrid>
                <ToolSep />
                <ToolRows items={TOOLS_B} />
                <ToolSep />
                <ToolRows items={TOOLS_C} />
                <ToolSep />
                <ToolRows items={TOOLS_D} />
              </Toolbox>
              <Canvas>
                <BandColumn>
                  <BandTag $h={34} $bg="#dcdedd">[page]</BandTag>
                  <BandTag $h={23} $bg="#f0e8c0">page header</BandTag>
                  <BandTag $h={24} $bg="#f5dfb5">report header</BandTag>
                  <BandTag $h={27} $bg="#fff" $ruled $push>
                    <FoldMark />
                    simple band
                  </BandTag>
                  <BandTag $h={26} $bg="#f5dfb5">report footer</BandTag>
                  <BandTag $h={25} $bg="#f0e8c0">page footer</BandTag>
                </BandColumn>
                <RulerStage>
                  <TopRuler viewBox="0 0 2336 25">
                    <rect x="158" y="0" width="899" height="25" fill="#eef0fb" />
                    <path d="M0 24.500h1130" stroke="#d4d5d8" />
                    {CMS.map((i) => {
                      const x = 102 + i * 48.2
                      return (
                        <g key={i}>
                          <text x={x} y="13" textAnchor="middle" fontFamily="Liberation Sans" fontSize="14" fill="#555">{i + 1}</text>
                          <path d={i < 21 ? `M${x} 19v6M${x + 24.1} 13v12` : `M${x} 19v6`} stroke="#888" />
                        </g>
                      )
                    })}
                  </TopRuler>
                  <StageRow>
                    <LeftRuler viewBox="0 0 24 1539">
                      <rect x="0" y="131" width="24" height="47" fill="#fff" />
                      <rect x="0" y="178" width="24" height="1149" fill="#eef0fb" />
                      <rect x="0" y="1327" width="24" height="91" fill="#fff" />
                      {CMS_V.map((i) => {
                        const y = 61 + i * 48.1
                        return (
                          <g key={i}>
                            <text transform={`translate(11 ${y}) rotate(-90)`} textAnchor="middle" fontFamily="DejaVu Sans" fontSize="12" fill="#555">{i + 1}</text>
                            <path d={`M20 ${y}h4M17 ${y + 24}h7`} stroke="#999" />
                          </g>
                        )
                      })}
                    </LeftRuler>
                    <Stage>
                      <Sheet>
                        <GuideV $x={60} />
                        <GuideV $x={955} />
                        <GuideH $y={72} />
                        <GuideH $y={1359} />
                        <SheetTabs>
                          <SheetTab $on $w={125}>PAGE - 702 x 1009 px</SheetTab>
                          <SheetTab $w={75}>BACK ITEMS</SheetTab>
                          <SheetTab $w={82}>FRONT ITEMS</SheetTab>
                        </SheetTabs>
                        <HeaderBand>
                          <DateCell $w={44}>Date:</DateCell>
                          <DateCell $w={60}>{'${date}'}</DateCell>
                          <GreenDot />
                        </HeaderBand>
                        <GrayBand $h={21}>Report Header</GrayBand>
                        <SimpleBand>
                          [Simple Band] 1(folded)
                          <DragWidget>
                            <svg width="14" height="20" viewBox="0 0 14 20" fill="none" stroke="currentColor" strokeWidth="1.6">
                              <path d="M1 2h2M5 2h2M9 2h2M12 2h2" strokeWidth="1.4" />
                              <path d="M7 6v12M3 14l4 4 4-4" />
                            </svg>
                          </DragWidget>
                          <Handle $x="0" $y="-2px" />
                          <Handle $x="50%" $y="-2px" />
                          <Handle $x="100%" $y="-2px" />
                          <Handle $x="0" $y="13px" />
                          <Handle $x="100%" $y="13px" />
                          <Handle $x="0" $y="28px" />
                          <Handle $x="50%" $y="28px" />
                          <Handle $x="100%" $y="28px" />
                        </SimpleBand>
                        <BodySpace />
                        <AddBand>
                          <svg width="20" height="20" viewBox="0 0 20 20" fill="currentColor">
                            <path d="M9.500 0h1v20h-1zM0 8h20v3H0z" />
                          </svg>
                        </AddBand>
                        <GrayBand $h={25} $top="#d4d5d8">Report Footer</GrayBand>
                        <GrayBand $h={24} $top="#d8d8d8">Page Footer</GrayBand>
                      </Sheet>
                    </Stage>
                  </StageRow>
                </RulerStage>
                <CanvasThumb />
              </Canvas>
            </Workspace>
            <Bottom>
              <PageTabs>
                <PageTab $w={93} $pl={17} $on>Report</PageTab>
                <PageTab $w={73} $pl={17}>Json</PageTab>
                <PageTab $w={110} $pl={17}>Preview</PageTab>
                <PageTab $w={85} $ml="auto" $center $on $bold>Page1</PageTab>
                <AddPage>+</AddPage>
              </PageTabs>
              <AssetPanel>
                <AssetHead>
                  <AssetTabs>
                    <AssetTab $on>ASSETS</AssetTab>
                    <AssetTab>DATA</AssetTab>
                    <AssetTab>SCRIPT</AssetTab>
                    <AssetTab>LANGUAGES</AssetTab>
                    <AssetTab>HISTORY</AssetTab>
                  </AssetTabs>
                  <ViewTools>
                    <ViewBtn $on $mr={8}>
                      <svg width="28" height="28" viewBox="0 0 28 28" fill="none" stroke="currentColor" strokeWidth="1.6">
                        <rect x="2" y="2" width="10" height="10" />
                        <rect x="16" y="2" width="10" height="10" />
                        <rect x="2" y="16" width="10" height="10" />
                        <rect x="16" y="16" width="10" height="10" />
                      </svg>
                    </ViewBtn>
                    <ViewBtn $dim $mr={22}>
                      <svg width="28" height="28" viewBox="0 0 28 28" fill="none" stroke="currentColor" strokeWidth="1.5">
                        <rect x="1" y="1" width="6" height="6" />
                        <rect x="11" y="2" width="15" height="4" />
                        <rect x="1" y="11" width="6" height="6" />
                        <rect x="11" y="12" width="15" height="4" />
                        <rect x="1" y="21" width="6" height="6" />
                        <rect x="11" y="22" width="15" height="4" />
                      </svg>
                    </ViewBtn>
                    <CloseX>X</CloseX>
                  </ViewTools>
                </AssetHead>
                <AssetTree>
                  <AssetThumb />
                  <AssetRow $x={19} $gap={12}>
                    <Chevron size={14} />
                    Assets
                  </AssetRow>
                  <AssetRow $x={33} $gap={11}>
                    <Chevron size={14} />
                    <svg width="20" height="22" viewBox="0 0 20 22">
                      <path d="M0 3h8l2 3h10v15H0z" fill="#9ab98f" />
                    </svg>
                    Stock
                  </AssetRow>
                  <AssetRow $x={73} $gap={9}>
                    <svg width="20" height="22" viewBox="0 0 20 22" fill="none" stroke="#a5a7ab" strokeWidth="1.5">
                      <path d="M1 3h7l2 3h9v15H1z" />
                      <path d="M6 11h8l-4 6z" fill="#a5a7ab" stroke="none" />
                    </svg>
                    Favorites
                  </AssetRow>
                  <AssetRow $x={73} $gap={9}>
                    <svg width="20" height="22" viewBox="0 0 20 22" fill="none" stroke="#a5a7ab" strokeWidth="1.5">
                      <path d="M1 3h7l2 3h9v15H1z" />
                    </svg>
                    일반 아이콘들
                  </AssetRow>
                </AssetTree>
              </AssetPanel>
            </Bottom>
          </Center>
          <Inspector>
            <PanelHead $h={46} $left={17} $right={18} $pb={5}>
              PROPERTY INSPECTOR
              <Dots>...</Dots>
            </PanelHead>
            <PathBar>report.page.body.cbox.simpleband</PathBar>
            <PropScroll>
              <PropList>
                {SECTIONS.map(([name, rowH, rows]) => (
                  <div key={name}>
                    <SectionHead>
                      <Chevron />
                      {name}
                    </SectionHead>
                    <SectionBody>
                      {rows.map((r) => (
                        <Row key={r.l} $h={rowH}>
                          <Label>{r.l}</Label>
                          <Field row={r} />
                        </Row>
                      ))}
                    </SectionBody>
                  </div>
                ))}
              </PropList>
              <PropThumb />
            </PropScroll>
          </Inspector>
        </Main>
        <StatusBar>
          R2 Designer with RealReport
          <StatusItems>
            <StatusItem $mr={10}>New Report-1</StatusItem>
            <StatusItem $size={16.4}>report.page.body.cbox.simpleband</StatusItem>
            <StatusItem>
              <svg width="19" height="19" viewBox="0 0 19 19" fill="none" stroke="currentColor" strokeWidth="1.3">
                <circle cx="9.5" cy="9.5" r="8.5" />
                <circle cx="9.5" cy="7" r="2.8" />
                <path d="M2.500 14c2-2.500 4.500-3 7-3s5 .5 7 3" />
              </svg>
              EVALUATION
            </StatusItem>
            <StatusItem>
              <svg width="19" height="21" viewBox="0 0 19 21" fill="none" stroke="currentColor" strokeWidth="1.3">
                <circle cx="9.5" cy="12" r="8" />
                <path d="M6 1h7M9.500 1v11" />
              </svg>
              2/5/2030
            </StatusItem>
            <StatusItem>2024. 8. 9.</StatusItem>
          </StatusItems>
        </StatusBar>
      </Window>
    </Screen>
  )
}
